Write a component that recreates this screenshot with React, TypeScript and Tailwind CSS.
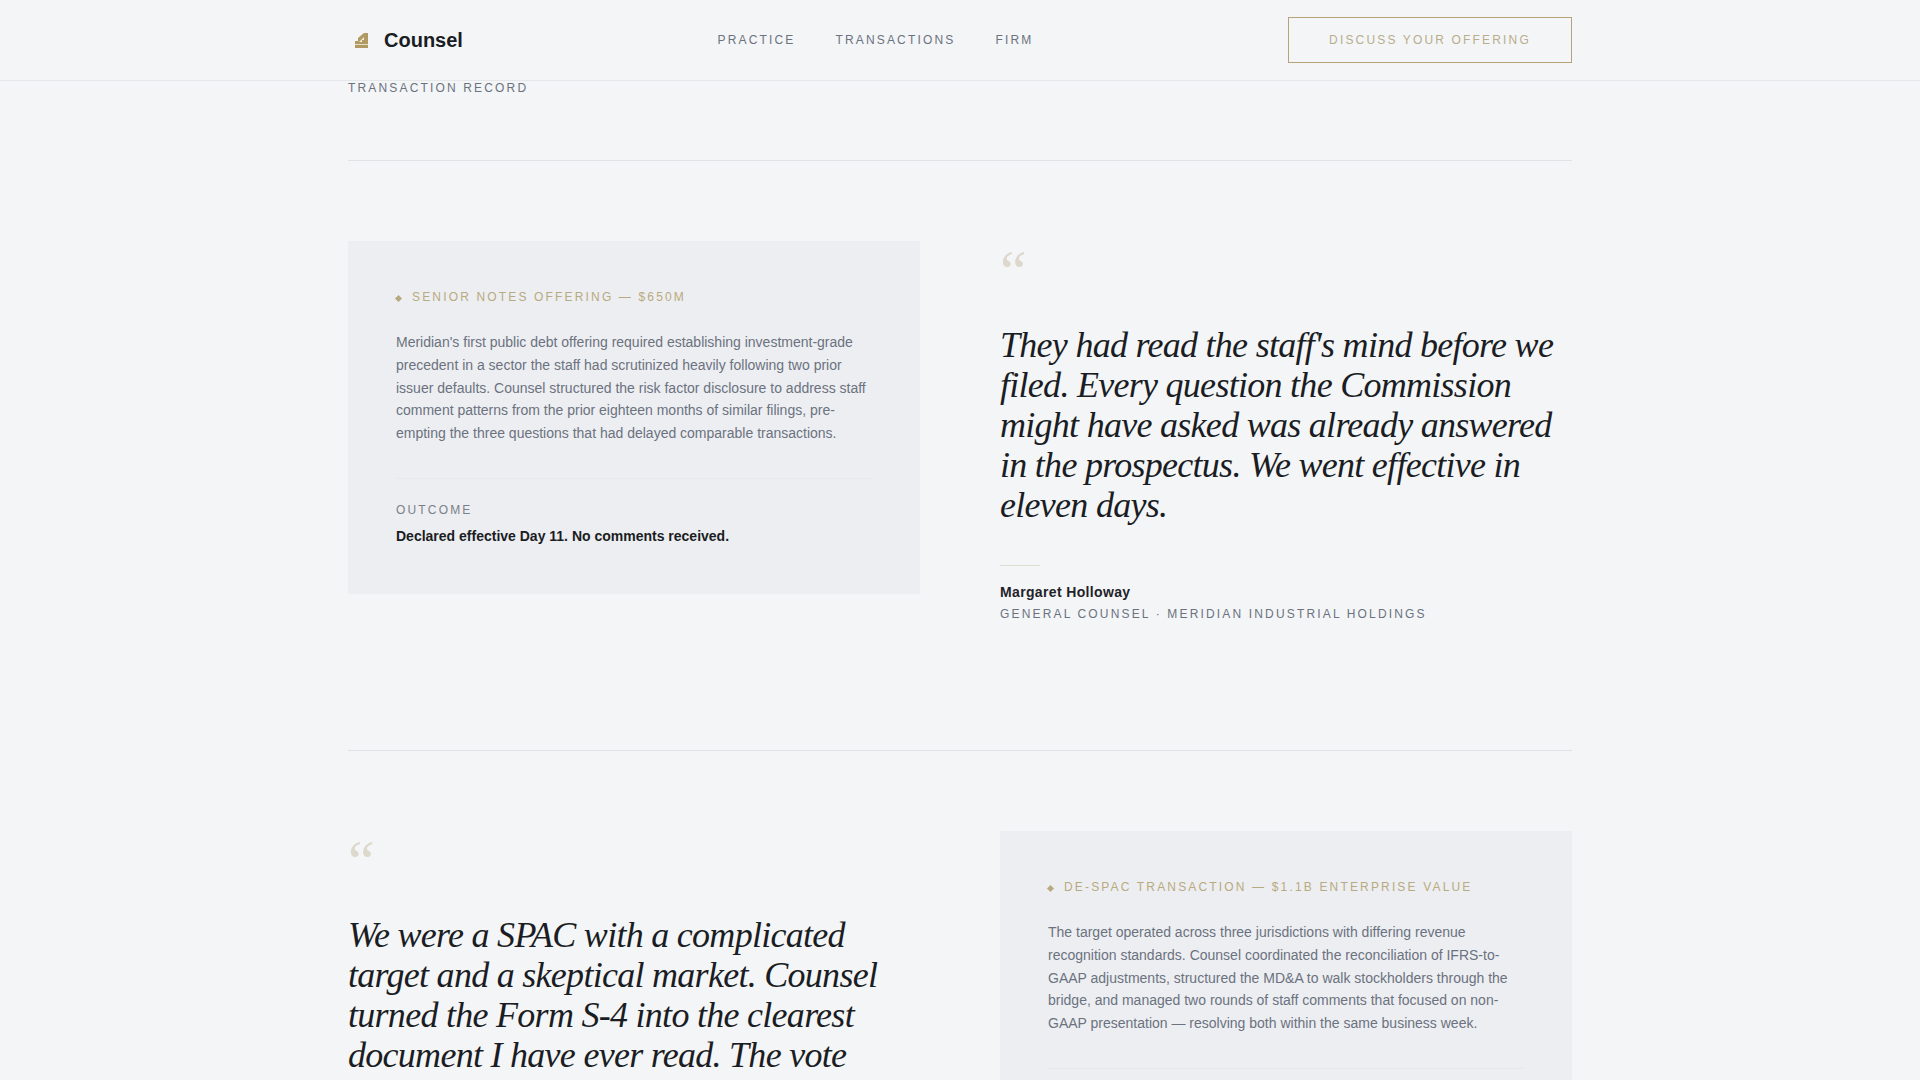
const sans = "font-['Liberation_Sans',Arial,sans-serif]"

function CaseCard({ tag, body, outcome }: { tag: string; body: string; outcome?: string }) {
  return (
    <div className="bg-[#edeef1] px-12 pt-12 pb-[47px]">
      <div className="flex items-center gap-[11px] text-[12px] leading-[16px] tracking-[0.18em] text-[#b8aa80]">
        <span className="mt-[3px] h-[5px] w-[5px] rotate-45 bg-[#b8aa80]" />
        {tag}
      </div>
      <p className="mt-[26px] text-[14px] leading-[22.75px] text-[#6b7280]">{body}</p>
      <div className="mt-[33px] border-t border-[#e7e8eb] pt-6">
        <div className="text-[12px] leading-[14px] tracking-[0.18em] text-[#7b8088]">OUTCOME</div>
        {outcome && <div className="mt-2 text-[14px] leading-[22px] font-bold text-[#1a1d23]">{outcome}</div>}
      </div>
    </div>
  )
}

function Quote({ text, name, role }: { text: string; name?: string; role?: string }) {
  return (
    <div>
      <div className="mb-6 font-['Liberation_Serif',serif] text-[60px] leading-none text-[#dcd8cc]">“</div>
      <blockquote className="font-['Liberation_Serif',serif] text-[36px] leading-[40px] tracking-[-0.02em] text-[#1a1d23] italic">
        {text}
      </blockquote>
      {name && (
        <div className="mt-10">
          <div className="h-px w-10 bg-[#dedbd0]" />
          <div className="mt-[15px] text-[14px] leading-[22px] font-bold tracking-[0.025em] text-[#1f2329]">{name}</div>
          <div className="mt-px text-[12px] leading-[20px] tracking-[0.18em] text-[#6b7280]">{role}</div>
        </div>
      )}
    </div>
  )
}

export default function App() {
  return (
    <div className={`h-screen overflow-hidden bg-[#f4f5f7] ${sans}`}>
      <header className="h-[81px] border-b border-[#e5e7eb]">
        <div className="mx-auto flex h-full max-w-[1320px] items-center justify-between px-12">
          <div className="flex items-center">
            <svg viewBox="0 0 13 16" className="ml-[7px] h-[16px] w-[13px]">
              <path d="M0 16 V9 L3 9 L3 6 L9 1 H13 V16 Z" fill="#b09a62" />
              <path d="M4 10 L9 5 V8 H7 V10 Z" fill="#f1ecdc" />
              <path d="M0 12.5 H13" stroke="#e6dfc8" strokeWidth="1" />
            </svg>
            <span className="ml-4 text-[20px] font-bold text-[#1a1d23]">Counsel</span>
          </div>
          <nav className="flex items-center gap-10 text-[12px] tracking-[0.18em] text-[#6b7280]">
            <span>PRACTICE</span>
            <span>TRANSACTIONS</span>
            <span>FIRM</span>
          </nav>
          <div className="flex h-[46px] w-[284px] items-center justify-center border border-[#b5a47a] text-[12px] tracking-[0.18em] text-[#b8ad8c]">
            DISCUSS YOUR OFFERING
          </div>
        </div>
      </header>

      <main className="mx-auto max-w-[1320px] px-12">
        <div className="text-[12px] leading-[14px] tracking-[0.18em] text-[#6b7280]">TRANSACTION RECORD</div>
        <div className="mt-[65px] h-px bg-[#dfe2e6]" />

        <section className="grid grid-cols-2 items-start gap-20 border-b border-[#dfe2e6] pt-20 pb-[126px]">
          <CaseCard
            tag="SENIOR NOTES OFFERING — $650M"
            body="Meridian's first public debt offering required establishing investment-grade precedent in a sector the staff had scrutinized heavily following two prior issuer defaults. Counsel structured the risk factor disclosure to address staff comment patterns from the prior eighteen months of similar filings, pre-empting the three questions that had delayed comparable transactions."
            outcome="Declared effective Day 11. No comments received."
          />
          <Quote
            text="They had read the staff's mind before we filed. Every question the Commission might have asked was already answered in the prospectus. We went effective in eleven days."
            name="Margaret Holloway"
            role="GENERAL COUNSEL · MERIDIAN INDUSTRIAL HOLDINGS"
          />
        </section>

        <section className="grid grid-cols-2 items-start gap-20 pt-20">
          <Quote text="We were a SPAC with a complicated target and a skeptical market. Counsel turned the Form S-4 into the clearest document I have ever read. The vote" />
          <CaseCard
            tag="DE-SPAC TRANSACTION — $1.1B ENTERPRISE VALUE"
            body="The target operated across three jurisdictions with differing revenue recognition standards. Counsel coordinated the reconciliation of IFRS-to-GAAP adjustments, structured the MD&A to walk stockholders through the bridge, and managed two rounds of staff comments that focused on non-GAAP presentation — resolving both within the same business week."
          />
        </section>
      </main>
    </div>
  )
}
